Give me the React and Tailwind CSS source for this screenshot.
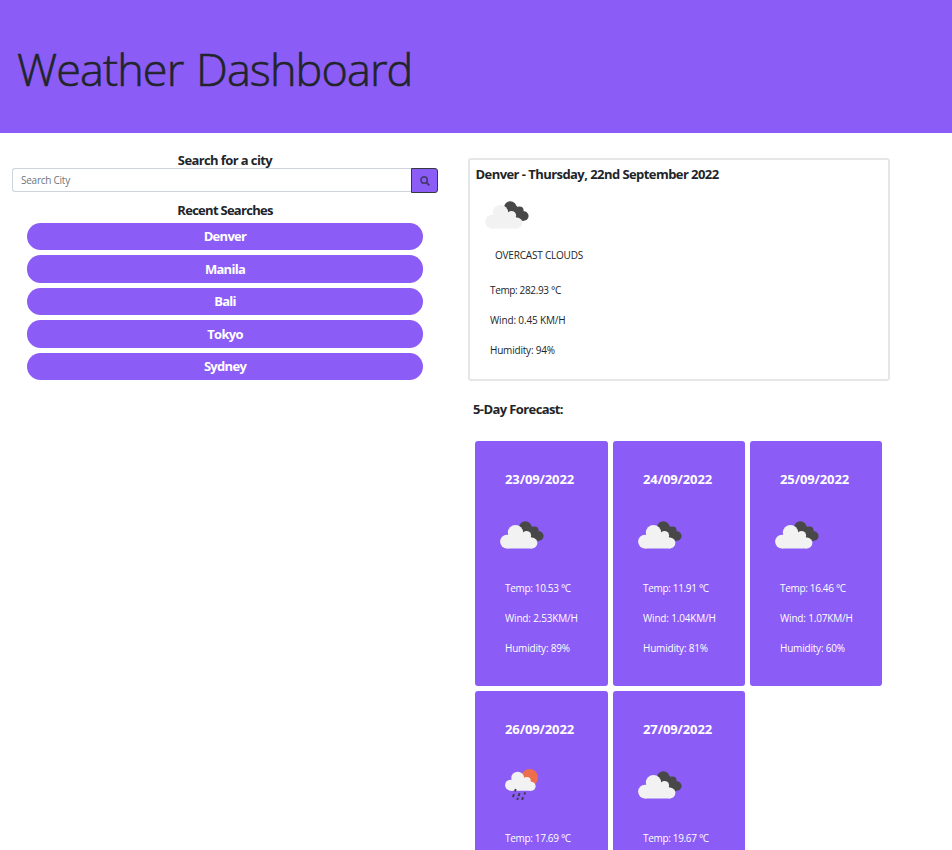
import React from 'react';

const cities = ['Denver', 'Manila', 'Bali', 'Tokyo', 'Sydney'];

const forecast = [
  { date: '23/09/2022', icon: 'clouds', temp: '10.53', wind: '2.53', humidity: 89 },
  { date: '24/09/2022', icon: 'clouds', temp: '11.91', wind: '1.04', humidity: 81 },
  { date: '25/09/2022', icon: 'clouds', temp: '16.46', wind: '1.07', humidity: 60 },
  { date: '26/09/2022', icon: 'rain', temp: '17.69' },
  { date: '27/09/2022', icon: 'clouds', temp: '19.67' },
];

function Clouds() {
  return (
    <svg width="44" height="28" viewBox="0 0 44 28" className="block">
      <g fill="#484848">
        <circle cx="25.3" cy="6.4" r="6.2" />
        <circle cx="34.5" cy="9.6" r="4.1" />
        <circle cx="38.9" cy="15" r="4.7" />
        <path d="M20 8L29 3L40 12L39 19.7H33L22 15Z" />
      </g>
      <g fill="#f2f2f2">
        <circle cx="15.5" cy="11.7" r="7.7" />
        <circle cx="6.9" cy="20.6" r="6.8" />
        <circle cx="26.5" cy="14.6" r="4.6" />
        <circle cx="32" cy="22" r="5.4" />
        <path d="M6.9 27.4H32V17L26 13L15 9L8 14Z" />
      </g>
    </svg>
  );
}

function SunRain() {
  return (
    <svg width="34" height="32" viewBox="0 0 34 32" className="block">
      <circle cx="24.6" cy="8.6" r="8.5" fill="#ec6e4c" />
      <g fill="#f2f2f2">
        <circle cx="12.7" cy="9.1" r="6.4" />
        <circle cx="5.6" cy="16.2" r="5.5" />
        <circle cx="21.8" cy="12" r="4" />
        <circle cx="26.1" cy="17.2" r="4.5" />
        <path d="M5.6 21.7H26.1V13L21 10L12 8L6 11Z" />
      </g>
      <path
        d="M10.8 20L9.9 22.5M9 25.2L7.9 28.2M14.6 24.2L13.5 27.2M20.2 23.3L19.3 25.5M12.9 28.7L12.2 30.9M18.1 28.1L17.1 31"
        stroke="#3f3a4c"
        strokeWidth="1.9"
      />
    </svg>
  );
}

function ForecastCard({ day }) {
  return (
    <article className="h-[245px] rounded-[3px] bg-[#8b5cf6] pt-7 pl-[30px] text-white">
      <h3 className="h-5 text-[13px] leading-5 font-bold tracking-[-0.12px]">{day.date}</h3>
      <div className="h-[84px]">
        {day.icon === 'rain' ? (
          <div className="pt-[30px]"><SunRain /></div>
        ) : (
          <div className="-ml-[5px] pt-8"><Clouds /></div>
        )}
      </div>
      <div className="text-[10px] leading-[30px]">
        <p className="tracking-[-0.33px]">Temp: {day.temp} °C</p>
        {day.wind && <p className="tracking-[-0.18px]">Wind: {day.wind}KM/H</p>}
        {day.humidity && <p className="tracking-[-0.2px]">Humidity: {day.humidity}%</p>}
      </div>
    </article>
  );
}

export default function App() {
  return (
    <div className="h-[850px] w-[952px] overflow-hidden bg-white font-['Open_Sans','Noto_Sans',sans-serif] text-[#212529]">
      <header className="flex h-[133px] items-center bg-[#8b5cf6] pt-[3px] pl-[17px]">
        <h1 className="text-[45px] leading-none font-light tracking-[-0.9px] whitespace-nowrap [-webkit-text-stroke:0.6px_#212529] [word-spacing:2px]">
          Weather Dashboard
        </h1>
      </header>
      <div className="flex">
        <aside className="w-[438px] pt-[18px] pl-3 text-center">
          <h2 className="h-[17px] text-[13px] leading-[18px] font-bold tracking-[-0.6px]">Search for a city</h2>
          <div className="flex h-[25px]">
            <input
              placeholder="Search City"
              className="h-6 min-w-0 flex-1 rounded-l-[3px] border border-r-0 border-[#ced4da] px-2 text-[10px] tracking-[-0.25px] outline-none placeholder:text-[#6c757d]"
            />
            <button className="flex w-[27px] items-center justify-center rounded-r-[3px] border border-[#343a40] bg-[#8b5cf6]">
              <svg width="10" height="10" viewBox="0 0 10 10" fill="none" stroke="#453a72" strokeWidth="1.6">
                <circle cx="4.1" cy="4.1" r="3.2" />
                <path d="M6.5 6.5L9.4 9.4" strokeWidth="1.9" />
              </svg>
            </button>
          </div>
          <h2 className="mt-2 h-[22px] text-[13px] leading-[19px] font-bold tracking-[-0.72px]">Recent Searches</h2>
          <div className="flex flex-col gap-[5px] px-[15px]">
            {cities.map((city) => (
              <button
                key={city}
                className="h-[27.4px] rounded-[13.5px] bg-[#8b5cf6] pb-[0.5px] text-[13px] leading-[26px] font-bold tracking-[-0.7px] text-white"
              >
                {city}
              </button>
            ))}
          </div>
        </aside>
        <main className="ml-[30px] w-[422px] pt-[25px]">
          <section className="h-[223px] rounded-[3px] border-2 border-[#e5e6e8] pt-1">
            <h2 className="pl-[5.5px] text-[13px] leading-5 font-bold tracking-[-0.56px]">Denver - Thursday, 22nd September 2022</h2>
            <div className="h-[56px] pt-[17px] pl-[15px]"><Clouds /></div>
            <p className="h-[35px] pl-[25px] text-[10px] leading-[30px] tracking-[-0.2px]">OVERCAST CLOUDS</p>
            <div className="pl-5 text-[10px] leading-[30px]">
              <p className="tracking-[-0.35px]">Temp: 282.93 °C</p>
              <p className="tracking-[-0.15px]">Wind: 0.45 KM/H</p>
              <p className="tracking-[-0.2px]">Humidity: 94%</p>
            </div>
          </section>
          <h2 className="mt-[18px] h-[42px] pl-[5px] text-[13px] leading-5 font-bold tracking-[-0.6px]">5-Day Forecast:</h2>
          <section className="ml-[7px] grid grid-cols-[133px_132px_132px] gap-[5px]">
            {forecast.map((day) => (
              <ForecastCard key={day.date} day={day} />
            ))}
          </section>
        </main>
      </div>
    </div>
  );
}
